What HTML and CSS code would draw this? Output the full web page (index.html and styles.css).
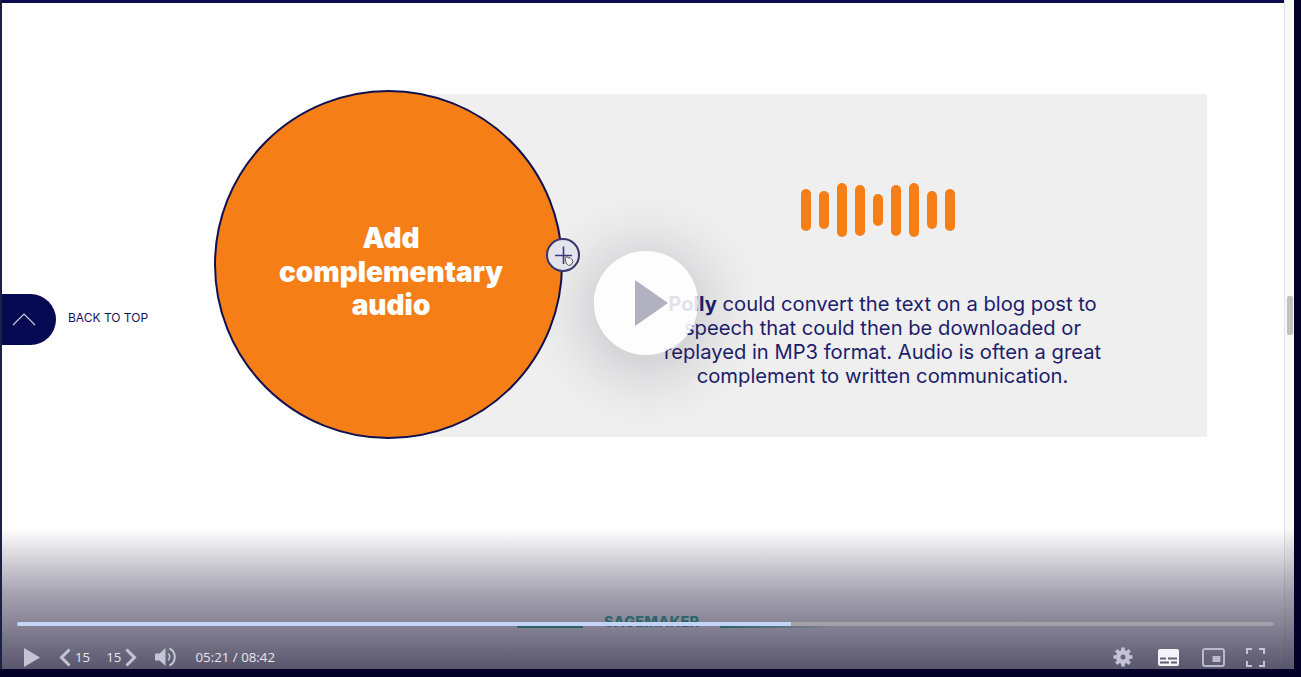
FILE: index.html
```html
<!DOCTYPE html>
<html lang="en">
<head>
<meta charset="utf-8">
<title>Add complementary audio</title>
<link rel="stylesheet" href="styles.css">
</head>
<body>
<main class="player">
  <div class="page">
    <div class="topline"></div>
    <section class="slide">
      <a class="back">
        <span class="back-pill">
          <svg width="24" height="14" viewBox="0 0 24 14"><path d="M1 13 L12 2 L23 13" fill="none" stroke="#c9cde0" stroke-width="1.2"/></svg>
        </span>
        <span class="back-text">BACK TO TOP</span>
      </a>
      <div class="content">
        <div class="circle">
          <h2>Add complementary audio</h2>
          <span class="plus">
            <svg width="33" height="33" viewBox="0 0 33 33">
              <path d="M16.5 7.5V25M8 16.500H25" stroke="#3c3a78" stroke-width="1.6" fill="none"/>
              <path d="M18 18.500l2 -1 1 1.500 2 -0.500 2 2 1 2 -1.500 3 -3 1 -2.500 -2.500z" fill="#f2f0ec" stroke="#55566a" stroke-width="1"/>
            </svg>
          </span>
        </div>
        <div class="panel">
          <div class="wave">
            <i class="b1"></i><i class="b2"></i><i class="b3"></i><i class="b4"></i><i class="b5"></i><i class="b6"></i><i class="b7"></i><i class="b8"></i><i class="b9"></i>
          </div>
          <p><b>Polly</b> could convert the text on a blog post to speech that could then be downloaded or replayed in MP3 format. Audio is often a great complement to written communication.</p>
        </div>
      </div>
    </section>
    <div class="next-title">SAGEMAKER</div>
    <div class="next-rule"></div>
  </div>
  <aside class="scroll"><span class="thumb"></span></aside>

  <button class="bigplay" aria-label="Play">
    <svg width="34" height="46" viewBox="0 0 34 46"><path d="M0 0L33 23L0 46Z" fill="#b1b1bf"/></svg>
  </button>

  <div class="controls">
    <div class="track"><span class="played"></span></div>
    <div class="bar">
      <svg class="play" width="16" height="19" viewBox="0 0 16 19"><path d="M0 0L16 9.500L0 19Z" fill="#c4c4d4"/></svg>
      <span class="skip skip-back">
        <svg width="12" height="19" viewBox="0 0 12 19"><path d="M10.500 1.500L2.500 9.500L10.500 17.500" fill="none" stroke="#c4c4d4" stroke-width="3"/></svg>
        <span>15</span>
      </span>
      <span class="skip skip-fwd">
        <span>15</span>
        <svg width="12" height="19" viewBox="0 0 12 19"><path d="M1.500 1.500L9.500 9.500L1.500 17.500" fill="none" stroke="#c4c4d4" stroke-width="3"/></svg>
      </span>
      <svg class="vol" width="21" height="20" viewBox="0 0 21 20">
        <path d="M0 6.500H4.500L10.500 1V19L4.500 13.500H0Z" fill="#c4c4d4"/>
        <path d="M13 6.500a4.500 4.500 0 0 1 0 7" fill="none" stroke="#c4c4d4" stroke-width="1.600"/>
        <path d="M14.500 1.500a9.500 9.500 0 0 1 0 17" fill="none" stroke="#c4c4d4" stroke-width="2"/>
      </svg>
      <span class="time">05:21 / 08:42</span>
      <span class="spacer"></span>
      <svg class="gear" width="20" height="20" viewBox="0 0 20 20">
        <path d="M10 3a7 7 0 1 0 0 14a7 7 0 0 0 0 -14zm0 4.500a2.500 2.500 0 1 1 0 5a2.500 2.500 0 0 1 0 -5z" fill="#c4c4d4" fill-rule="evenodd"/>
        <path d="M10 0.500V4.500M10 15.500V19.500M0.500 10H4.500M15.500 10H19.500M3.300 3.300L6 6M14 14L16.700 16.700M16.700 3.300L14 6M6 14L3.300 16.700" stroke="#c4c4d4" stroke-width="3.600"/>
      </svg>
      <svg class="cc" width="21" height="17" viewBox="0 0 21 17">
        <path fill-rule="evenodd" fill="#f4f4f8" d="M2 0H19a2 2 0 0 1 2 2V15a2 2 0 0 1 -2 2H2a2 2 0 0 1 -2 -2V2a2 2 0 0 1 2 -2zM2 8.500V10.500H8V8.500zM10 8.500V10.500H19V8.500zM2 12.500V14.500H11V12.500zM13 12.500V14.500H19V12.500z"/>
      </svg>
      <svg class="pip" width="23" height="19" viewBox="0 0 23 19">
        <rect x="1" y="1" width="21" height="17" rx="2" fill="none" stroke="#b9b9c8" stroke-width="2"/>
        <rect x="10.500" y="8" width="8" height="6" fill="#b9b9c8"/>
      </svg>
      <svg class="full" width="19" height="19" viewBox="0 0 19 19">
        <path d="M1 6V1H6M13 1H18V6M18 13V18H13M6 18H1V13" fill="none" stroke="#c4c4d4" stroke-width="2"/>
      </svg>
    </div>
  </div>
</main>
</body>
</html>
```
FILE: styles.css
```css
* { box-sizing: border-box; }
html, body { margin: 0; height: 100%; }
body { background: #03012a; overflow: hidden; font-family: Inter, "Liberation Sans", sans-serif; }

.player { position: relative; width: 1294px; height: 669px; display: flex; overflow: hidden; background: #fff; border-left: 2px solid #1b2140; }
.page { width: 1282px; display: flex; flex-direction: column; background: #fff; }
.topline { height: 3px; background: #0b0d50; flex: none; }

.slide { display: flex; align-items: center; padding-top: 87px; }
.back { display: flex; align-items: center; gap: 12px; width: 212px; flex: none; margin-top: 109px; }
.back-pill { width: 54px; height: 51px; background: #050a52; border-radius: 0 26px 26px 0; display: flex; align-items: center; justify-content: center; padding-right: 11px; }
.back-text { font-size: 12px; font-weight: 400; color: #13125c; white-space: nowrap; margin-bottom: 4px; }

.content { display: flex; align-items: center; }
.circle { position: relative; z-index: 1; width: 349px; height: 349px; flex: none; margin-right: -133px; border-radius: 50%; background: #f67e16; border: 2px solid #0e1052; display: flex; align-items: center; justify-content: center; padding: 16px 0 0 5px; }
.circle h2 { margin: 0; width: 250px; font-size: 28px; line-height: 33.5px; font-weight: 900; color: #fff; text-align: center; }
.plus { position: absolute; left: 330px; top: 146px; width: 34px; height: 34px; border-radius: 50%; background: #e4e4ec; border: 2px solid #36366f; display: flex; align-items: center; justify-content: center; }
.plus svg { flex: none; }

.panel { width: 777px; height: 343px; margin-top: 2px; background: #efefef; display: flex; flex-direction: column; align-items: center; padding: 89px 0 0 133px; }
.wave { display: flex; align-items: center; gap: 8px; height: 54px; margin-right: 14px; }
.wave i { display: block; width: 10px; border-radius: 5px; background: #f67e16; }
.b1 { height: 42px; } .b2 { height: 38px; } .b3 { height: 54px; } .b4 { height: 51px; } .b5 { height: 32px; }
.b6 { height: 51px; } .b7 { height: 54px; } .b8 { height: 38px; } .b9 { height: 42px; }
.panel p { margin: 55px 5px 0 0; width: 464px; font-size: 20.2px; line-height: 24px; color: #201d6b; text-align: center; }
.panel b { font-weight: 700; }

.next-title { margin: 174px 0 0 602px; font-size: 14.5px; font-weight: 800; line-height: 18px; letter-spacing: .2px; color: #17a98a; }
.next-rule { margin: -5px 0 0 515px; width: 320px; height: 2px; background: linear-gradient(to right, #17a98a 0 66px, transparent 66px 203px, #17a98a 203px, transparent 100%); }

.scroll { position: relative; width: 10px; background: #f8f8f8; border-left: 1px solid #e4e4e4; flex: none; }
.thumb { position: absolute; left: 2px; top: 296px; width: 6px; height: 39px; border-radius: 2px; background: #c2c2c2; }

.bigplay { position: absolute; left: 592px; top: 251px; width: 104px; height: 104px; border: 0; border-radius: 50%; background: rgba(255,255,255,.87); box-shadow: 0 8px 60px 12px rgba(40,40,60,.2); display: flex; align-items: center; justify-content: center; padding: 0 0 0 11px; }

.controls { position: absolute; left: 0; right: 0; bottom: 0; height: 141px; background: linear-gradient(to bottom, rgba(60,56,84,0) 0%, rgba(60,56,84,.45) 45%, rgba(60,56,84,.85) 100%); display: flex; flex-direction: column; justify-content: flex-end; padding: 0 10px 0 15px; }
.track { height: 4px; margin: 0 10px 19px 0; background: rgba(190,190,190,.5); border-radius: 2px; overflow: hidden; }
.played { display: block; height: 100%; width: 61.57%; background: #c4d4f4; }
.bar { display: flex; align-items: center; height: 24px; color: #e6e6ee; font-family: "Open Sans", sans-serif; font-size: 13.3px; }
.bar svg { flex: none; }
.play { margin-left: 7px; }
.skip { display: flex; align-items: center; gap: 4px; }
.skip-back { margin-left: 19px; }
.skip-fwd { margin-left: 16px; }
.vol { margin-left: 18px; }
.time { margin-left: 19px; }
.spacer { flex: 1; }
.gear { margin-right: 25px; }
.cc { margin-right: 23px; }
.pip { margin-right: 21px; }
.full { margin-right: 19px; }
```
